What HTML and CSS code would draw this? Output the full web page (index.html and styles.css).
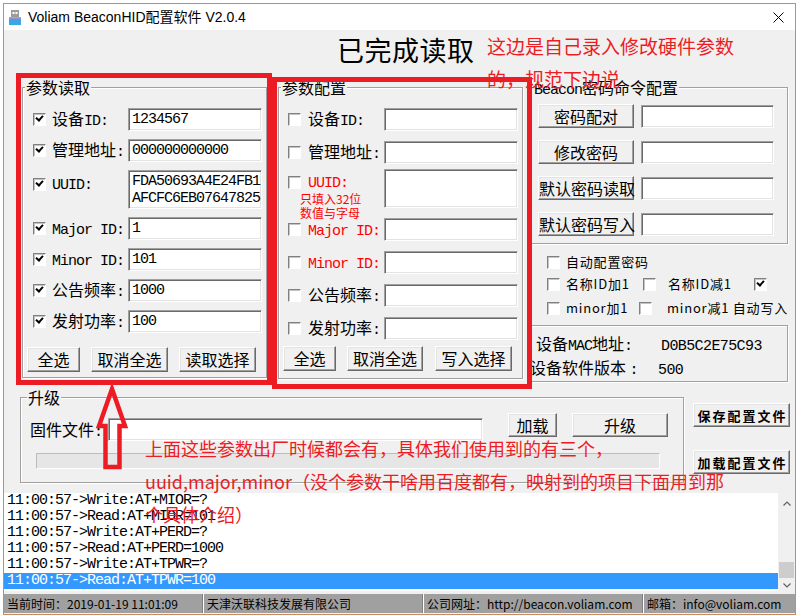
FILE: index.html
```html
<!DOCTYPE html>
<html lang="zh-CN">
<head>
<meta charset="UTF-8">
<meta name="viewport" content="width=device-width, initial-scale=1.0">
<title>Voliam BeaconHID配置软件 V2.0.4</title>
<link rel="stylesheet" href="styles.css">
</head>
<body>
<div class="window">
  <div class="titlebar">
    <svg class="app-icon" viewBox="0 0 12 15" width="12" height="15">
      <rect x="2" y="0" width="8" height="7" fill="#9c9c9c"/>
      <rect x="3.5" y="2" width="2" height="2" fill="#fff"/>
      <rect x="6.5" y="2" width="2" height="2" fill="#fff"/>
      <rect x="0" y="7" width="12" height="8" fill="#3aa6e4"/>
      <rect x="0" y="7" width="12" height="1.5" fill="#ec86b0"/>
    </svg>
    <span class="title">Voliam BeaconHID配置软件 V2.0.4</span>
    <svg class="close" viewBox="0 0 11 11" width="11" height="11">
      <path d="M0.5 0.5 L10.5 10.5 M10.5 0.5 L0.5 10.5" stroke="#000" stroke-width="1" fill="none"/>
    </svg>
  </div>

  <div class="client">
    <div class="heading">已完成读取</div>

    <div class="main">
      <!-- 参数读取 -->
      <div class="group read">
        <span class="group-title">参数读取</span>
        <div class="rows">
          <div class="row"><span class="cb on"></span><label>设备<span class="en">ID:</span></label><div class="edit">1234567</div></div>
          <div class="row"><span class="cb on"></span><label>管理地址<span class="en">:</span></label><div class="edit">000000000000</div></div>
          <div class="row uuid">
            <div class="uuid-label">
              <div class="uuid-top"><span class="cb on"></span><label><span class="en">UUID:</span></label></div>
            </div>
            <div class="edit tall">FDA50693A4E24FB1<br>AFCFC6EB07647825</div>
          </div>
          <div class="row"><span class="cb on"></span><label><span class="en">Major ID:</span></label><div class="edit">1</div></div>
          <div class="row"><span class="cb on"></span><label><span class="en">Minor ID:</span></label><div class="edit">101</div></div>
          <div class="row"><span class="cb on"></span><label>公告频率<span class="en">:</span></label><div class="edit">1000</div></div>
          <div class="row"><span class="cb on"></span><label>发射功率<span class="en">:</span></label><div class="edit">100</div></div>
        </div>
        <div class="btns">
          <button class="btn w53">全选</button>
          <button class="btn w77">取消全选</button>
          <button class="btn w77">读取选择</button>
        </div>
      </div>

      <!-- 参数配置 -->
      <div class="group cfg">
        <span class="group-title">参数配置</span>
        <div class="rows">
          <div class="row"><span class="cb"></span><label>设备<span class="en">ID:</span></label><div class="edit"></div></div>
          <div class="row"><span class="cb"></span><label>管理地址<span class="en">:</span></label><div class="edit"></div></div>
          <div class="row uuid">
            <div class="uuid-label">
              <div class="uuid-top"><span class="cb"></span><label class="red"><span class="en">UUID:</span></label></div>
              <div class="hint">只填入32位<br>数值与字母</div>
            </div>
            <div class="edit tall"></div>
          </div>
          <div class="row"><span class="cb"></span><label class="red"><span class="en">Major ID:</span></label><div class="edit"></div></div>
          <div class="row"><span class="cb"></span><label class="red"><span class="en">Minor ID:</span></label><div class="edit"></div></div>
          <div class="row"><span class="cb"></span><label>公告频率<span class="en">:</span></label><div class="edit"></div></div>
          <div class="row"><span class="cb"></span><label>发射功率<span class="en">:</span></label><div class="edit"></div></div>
        </div>
        <div class="btns">
          <button class="btn w53">全选</button>
          <button class="btn w76">取消全选</button>
          <button class="btn w77">写入选择</button>
        </div>
      </div>

      <!-- 密码命令 -->
      <div class="side">
        <div class="group pwd">
          <span class="group-title"><span class="en">Beacon</span>密码命令配置</span>
          <div class="pwd-row"><button class="btn w96">密码配对</button><div class="edit pw"></div></div>
          <div class="pwd-row"><button class="btn w96">修改密码</button><div class="edit pw"></div></div>
          <div class="pwd-row"><button class="btn w96">默认密码读取</button><div class="edit pw"></div></div>
          <div class="pwd-row"><button class="btn w96">默认密码写入</button><div class="edit pw"></div></div>
        </div>
        <div class="opts">
          <div class="opt-row"><span class="cb"></span><span class="opt">自动配置密码</span></div>
          <div class="opt-row">
            <div class="cell c1"><span class="cb"></span><span class="opt">名称ID加1</span></div>
            <div class="cell c2"><span class="cb"></span><span class="opt gap12">名称ID减1</span></div>
            <div class="cell"><span class="cb on push"></span></div>
          </div>
          <div class="opt-row r3">
            <div class="cell c1"><span class="cb"></span><span class="opt">minor加1</span></div>
            <div class="cell c2"><span class="cb"></span><span class="opt gap15">minor减1</span></div>
            <div class="cell"><span class="opt flush">自动写入</span></div>
          </div>
        </div>
        <div class="group mac">
          <div class="mac-line"><span class="mac-label">设备<span class="en">MAC</span>地址<span class="en">:</span></span><span class="en">D0B5C2E75C93</span></div>
          <div class="mac-line ver"><span class="mac-label">设备软件版本 <span class="en">:</span></span><span class="en">500</span></div>
        </div>
      </div>
    </div>

    <div class="lower">
      <div class="group upgrade">
        <span class="group-title">升级</span>
        <div class="fw-row">
          <label class="fw-label">固件文件<span class="en">:</span></label>
          <div class="edit fw"></div>
          <button class="btn load">加载</button>
          <button class="btn flash">升级</button>
        </div>
        <div class="progress"></div>
      </div>
      <div class="file-btns">
        <button class="btn file">保存配置文件</button>
        <button class="btn file">加载配置文件</button>
      </div>
    </div>

    <div class="log">
      <div class="log-lines">
        <div class="line">11:00:57-&gt;Write:AT+MIOR=?</div>
        <div class="line">11:00:57-&gt;Read:AT+MIOR=101</div>
        <div class="line">11:00:57-&gt;Write:AT+PERD=?</div>
        <div class="line">11:00:57-&gt;Read:AT+PERD=1000</div>
        <div class="line">11:00:57-&gt;Write:AT+TPWR=?</div>
        <div class="line sel">11:00:57-&gt;Read:AT+TPWR=100</div>
      </div>
      <div class="vscroll">
        <div class="sb-btn up"><svg viewBox="0 0 8 5" width="8" height="5"><path d="M0.5 4.5 L4 1 L7.5 4.5" stroke="#606060" stroke-width="1.2" fill="none"/></svg></div>
        <div class="sb-track"><div class="sb-thumb"></div></div>
        <div class="sb-btn down"><svg viewBox="0 0 8 5" width="8" height="5"><path d="M0.5 0.5 L4 4 L7.5 0.5" stroke="#606060" stroke-width="1.2" fill="none"/></svg></div>
      </div>
    </div>

    <div class="status">
      <div class="pane p1">当前时间：2019-01-19 11:01:09</div>
      <div class="pane p2">天津沃联科技发展有限公司</div>
      <div class="pane p3">公司网址：http://beacon.voliam.com</div>
      <div class="pane p4">邮箱：info@voliam.com</div>
    </div>
  </div>
</div>

<!-- annotations drawn over the screenshot -->
<div class="mark b1"></div>
<div class="mark b2"></div>
<svg class="arrow" viewBox="0 0 40 95" width="40" height="95">
  <polygon points="18,9 31,46 25.5,46 25.5,87 11.5,87 11.5,46 5,46" fill="none" stroke="#ed1c24" stroke-width="4.5" stroke-miterlimit="10"/>
</svg>
<div class="note n1">这边是自己录入修改硬件参数<br>的，规范下边说</div>
<div class="note n2">上面这些参数出厂时候都会有，具体我们使用到的有三个，<br>uuid,major,minor（没个参数干啥用百度都有，映射到的项目下面用到那<br>个具体介绍）</div>
</body>
</html>
```

FILE: styles.css
```css
body {
margin: 0;
width: 798px;
height: 616px;
position: relative;
overflow: hidden;
background: #fff;
font-family: "Noto Sans CJK SC", sans-serif;
font-size: 16px;
color: #000;
}

/* half-width latin, 8px per char like the dialog font */
.en {
font-family: "Liberation Mono", "Noto Sans CJK SC", monospace;
font-size: 15px;
letter-spacing: -1px;
}

/* Window frame */
.window {
margin: 3px 0 0 3px;
width: 793px;
height: 612px;
box-sizing: border-box;
border: 1px solid #cc8a5e;
background: #f0f0f0;
display: flex;
flex-direction: column;
overflow: hidden;
}

.titlebar {
flex: none;
height: 26px;
background: #fff;
display: flex;
align-items: center;
}

.app-icon {
margin-left: 5px;
}

.title {
margin-left: 7px;
font-family: "Liberation Sans", "Noto Sans CJK SC", sans-serif;
font-size: 14px;
line-height: 18px;
}

.close {
margin-left: auto;
margin-right: 11px;
}

.client {
flex: 1;
}

.heading {
box-sizing: border-box;
height: 57px;
padding: 5px 0 0 333px;
font-size: 27px;
line-height: 30px;
letter-spacing: 0.5px;
}

/* Group boxes */
.main {
display: flex;
align-items: flex-start;
height: 294px;
}

.group {
position: relative;
box-sizing: border-box;
border: 1px solid #a0a0a0;
box-shadow: inset 1px 1px 0 #fff, 1px 1px 0 #fff;
}

.group-title {
position: absolute;
top: -9px;
left: 2px;
padding: 0 1px;
background: #f0f0f0;
font-size: 16px;
line-height: 17px;
white-space: nowrap;
}

.group.read {
margin-left: 18px;
width: 245px;
height: 291px;
padding-top: 20px;
}

.group.cfg {
margin-left: 11px;
width: 245px;
height: 292px;
padding-top: 20px;
}

.rows {
display: flex;
flex-direction: column;
gap: 8px;
padding-left: 10px;
}

.cfg .rows {
gap: 10px;
padding-left: 9px;
}

.row {
display: flex;
align-items: center;
height: 23px;
}

.row label {
width: 76px;
font-size: 16px;
line-height: 20px;
white-space: nowrap;
}

.row label.red {
color: #f00;
}

.row.uuid {
align-items: flex-start;
height: 39px;
}

.cfg .row.uuid {
margin-top: -5px;
}

.uuid-label {
width: 95px;
}

.cfg .uuid-label {
width: 96px;
}

.uuid-top {
display: flex;
align-items: center;
height: 20px;
margin-top: 3px;
}

.read .uuid-top {
margin-top: 4px;
}

.hint {
margin-left: 12px;
color: #f00;
font-size: 12px;
line-height: 14px;
white-space: nowrap;
}

/* Checkboxes */
.cb {
flex: none;
position: relative;
width: 13px;
height: 13px;
box-sizing: border-box;
background: #fff;
border: 1px solid;
border-color: #808080 #fff #fff #808080;
box-shadow: inset 1px 1px 0 #c4c4c4;
margin-right: 6px;
}

.cfg .cb {
margin-right: 7px;
}

.cb.on::after {
content: "";
position: absolute;
left: 2px;
top: 1px;
width: 5px;
height: 3px;
border-left: 2px solid #000;
border-bottom: 2px solid #000;
transform: rotate(-48deg);
}

/* Edit boxes */
.edit {
flex: none;
box-sizing: border-box;
width: 134px;
height: 23px;
padding-left: 3px;
background: #fff;
border: 1px solid;
border-color: #a0a0a0 #fff #fff #a0a0a0;
box-shadow: inset 1px 1px 0 #696969, inset -1px -1px 0 #e3e3e3;
font-family: "Liberation Mono", monospace;
font-size: 15px;
letter-spacing: -1px;
line-height: 21px;
white-space: nowrap;
}

.edit.tall {
height: 39px;
padding-top: 2px;
line-height: 17px;
}

/* Buttons */
.btn {
box-sizing: border-box;
height: 25px;
padding: 0;
background: #f0f0f0;
border: 1px solid;
border-color: #fff #696969 #696969 #fff;
box-shadow: inset -1px -1px 0 #a0a0a0, inset 1px 1px 0 #e3e3e3;
font-family: "Noto Sans CJK SC", sans-serif;
font-size: 16px;
line-height: 21px;
color: #000;
text-align: center;
white-space: nowrap;
}

.w53 { width: 53px; }
.w76 { width: 76px; }
.w77 { width: 77px; }
.w96 { width: 96px; height: 24px; }

.btns {
display: flex;
gap: 11px;
margin-top: 14px;
padding-left: 4px;
}

.cfg .btns {
margin-top: 6px;
}

.cfg .btns .w77 {
margin-left: 1px;
}

/* Right column */
.side {
margin-left: 7px;
width: 258px;
}

.group.pwd {
height: 157px;
padding: 16px 0 0 7px;
display: flex;
flex-direction: column;
gap: 12px;
}

.pwd-row {
display: flex;
align-items: center;
gap: 7px;
height: 24px;
}

.edit.pw {
width: 133px;
}

.opts {
padding: 7px 0 0 17px;
}

.opt-row {
display: flex;
align-items: center;
height: 22px;
white-space: nowrap;
}

.opt-row.r3 {
margin-top: 2px;
}

.cell {
display: flex;
align-items: center;
}

.cell.c1 { width: 96px; }
.cell.c2 { width: 98px; }

.opt {
font-size: 13px;
letter-spacing: 0.8px;
line-height: 16px;
}

.opt.gap12 { margin-left: 6px; }
.opt.gap15 { margin-left: 9px; }

.cb.push {
margin-left: 13px;
}

.group.mac {
margin-top: 6px;
height: 57px;
padding-top: 5px;
}

.mac-line {
height: 24px;
line-height: 24px;
padding-left: 5px;
white-space: nowrap;
}

.mac-line.ver {
padding-left: 0;
margin-left: -1px;
}

.mac-label {
display: inline-block;
width: 125px;
}

.mac-line.ver .mac-label {
width: 128px;
}

.mac-line > .en {
letter-spacing: -0.6px;
}

/* Upgrade */
.lower {
display: flex;
margin-top: 16px;
}

.group.upgrade {
margin-left: 16px;
width: 664px;
height: 86px;
padding-top: 15px;
}

.upgrade .group-title {
left: 6px;
}

.fw-row {
display: flex;
align-items: flex-start;
height: 28px;
}

.fw-label {
margin: 5px 0 0 9px;
width: 78px;
line-height: 23px;
}

.edit.fw {
margin-top: 5px;
width: 375px;
}

.btn.load {
margin-left: 25px;
width: 49px;
height: 24px;
}

.btn.flash {
margin-left: 15px;
width: 96px;
height: 24px;
}

.progress {
margin: 12px 0 0 15px;
width: 624px;
height: 16px;
box-sizing: border-box;
border: 1px solid;
border-color: #bcbcbc #fff #fff #bcbcbc;
background: #e6e6e6;
}

.file-btns {
display: flex;
flex-direction: column;
gap: 23px;
margin-left: 9px;
padding-top: 6px;
}

.btn.file {
width: 97px;
height: 24px;
font-size: 13px;
font-weight: bold;
letter-spacing: 2px;
padding-left: 2px;
}

/* Log list */
.log {
display: flex;
margin-top: 10px;
height: 98px;
background: #fff;
}

.log-lines {
flex: 1;
font-family: "Liberation Mono", monospace;
font-size: 15px;
letter-spacing: -1px;
line-height: 16px;
white-space: nowrap;
}

.line {
padding-left: 3px;
}

.line.sel {
background: #3399ff;
color: #fff;
}

.vscroll {
width: 17px;
display: flex;
flex-direction: column;
background: #f0f0f0;
}

.sb-btn {
display: flex;
justify-content: center;
align-items: center;
}

.sb-btn.up { height: 20px; }
.sb-btn.down { height: 12px; }

.sb-track {
flex: 1;
display: flex;
flex-direction: column;
justify-content: flex-end;
align-items: center;
}

.sb-thumb {
width: 15px;
height: 16px;
margin-bottom: 1px;
background: #cdcdcd;
}

/* Status bar */
.status {
display: flex;
margin-top: 3px;
height: 19px;
background: #a0a0a0;
font-size: 12px;
line-height: 19px;
white-space: nowrap;
}

.pane {
box-sizing: border-box;
padding-left: 3px;
overflow: hidden;
}

.pane + .pane {
border-left: 1px solid #fff;
box-shadow: -1px 0 0 #808080;
}

.p1 { width: 199px; }
.p2 { width: 220px; }
.p3 { width: 220px; }
.p4 { flex: 1; }

/* Annotations */
.mark {
position: absolute;
box-sizing: border-box;
border: 5px solid #ed1c24;
}

.mark.b1 {
left: 16px;
top: 73px;
width: 256px;
height: 312px;
}

.mark.b2 {
left: 272px;
top: 77px;
width: 260px;
height: 312px;
}

.arrow {
position: absolute;
left: 94px;
top: 380px;
}

.note {
position: absolute;
color: #ed1c24;
white-space: nowrap;
}

.note.n1 {
left: 487px;
top: 29px;
font-size: 19px;
line-height: 33px;
}

.note.n2 {
left: 145px;
top: 432px;
font-size: 18px;
line-height: 33px;
}
```
